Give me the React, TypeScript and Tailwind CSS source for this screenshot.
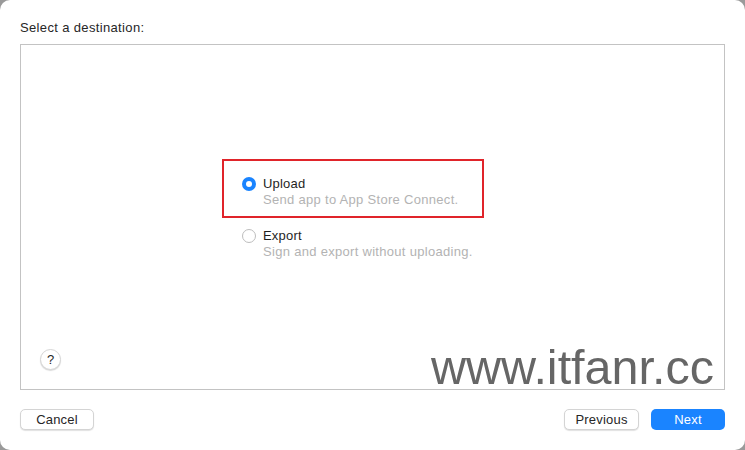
export default function App() {
  return (
    <div className="w-[745px] h-[450px] bg-[#9a9a9a] overflow-hidden" style={{ fontFamily: '"Liberation Sans", Arial, sans-serif' }}>
      <div className="w-[745px] h-[450px] bg-white rounded-[10px] flex flex-col px-[20px] pt-[20px]">
        <div className="text-[13px] tracking-[0.35px] text-[#262626] leading-[16px] h-[24px]">Select a destination:</div>
        <div className="relative h-[346px] border border-[#c3c3c3] flex flex-col">
          <div className="mt-[114px] ml-[201px] w-[262px] h-[59px] border-2 border-[#e0242a] pl-[18px] pt-[15px]">
            <div className="flex items-center gap-[7px]">
              <div className="w-[14px] h-[14px] rounded-full bg-[#1a84ff] flex items-center justify-center">
                <div className="w-[6px] h-[6px] rounded-full bg-white" />
              </div>
              <span className="text-[13px] tracking-[0.2px] leading-[16px] text-[#1f1f1f]">Upload</span>
            </div>
            <div className="ml-[21px] text-[13px] tracking-[0.3px] leading-[16px] text-[#b3b3b3] whitespace-nowrap">Send app to App Store Connect.</div>
          </div>
          <div className="ml-[221px] w-[262px] pt-[10px]">
            <div className="flex items-center gap-[7px]">
              <div className="w-[14px] h-[14px] rounded-full border border-[#bdbdbd] bg-white" />
              <span className="text-[13px] tracking-[0.2px] leading-[16px] text-[#1f1f1f]">Export</span>
            </div>
            <div className="ml-[21px] text-[13px] tracking-[0.3px] leading-[16px] text-[#b3b3b3] whitespace-nowrap">Sign and export without uploading.</div>
          </div>
          <div className="absolute left-[19px] bottom-[19px] w-[21px] h-[21px] rounded-full bg-white border border-[#d6d6d6] shadow-[0_1px_1px_rgba(0,0,0,0.15)] flex items-center justify-center text-[13px] text-[#262626]">?</div>
          <div className="absolute right-[10px] bottom-[-2px] text-[48.5px] leading-[48px] text-[#666666]" style={{ fontFamily: '"Liberation Sans", Arial, sans-serif' }}>www.itfanr.cc</div>
        </div>
        <div className="flex items-center mt-[19px]">
          <div className="w-[74px] h-[21px] rounded-[5px] bg-white border border-[#d4d4d4] shadow-[0_1px_1px_rgba(0,0,0,0.12)] flex items-center justify-center text-[13px] tracking-[0.2px] text-[#262626]">Cancel</div>
          <div className="flex-1" />
          <div className="w-[75px] h-[21px] rounded-[5px] bg-white border border-[#d4d4d4] shadow-[0_1px_1px_rgba(0,0,0,0.12)] flex items-center justify-center text-[13px] tracking-[0.2px] text-[#262626]">Previous</div>
          <div className="ml-[12px] w-[74px] h-[21px] rounded-[5px] bg-[#1a84ff] flex items-center justify-center text-[13px] tracking-[0.2px] text-white">Next</div>
        </div>
      </div>
    </div>
  );
}
